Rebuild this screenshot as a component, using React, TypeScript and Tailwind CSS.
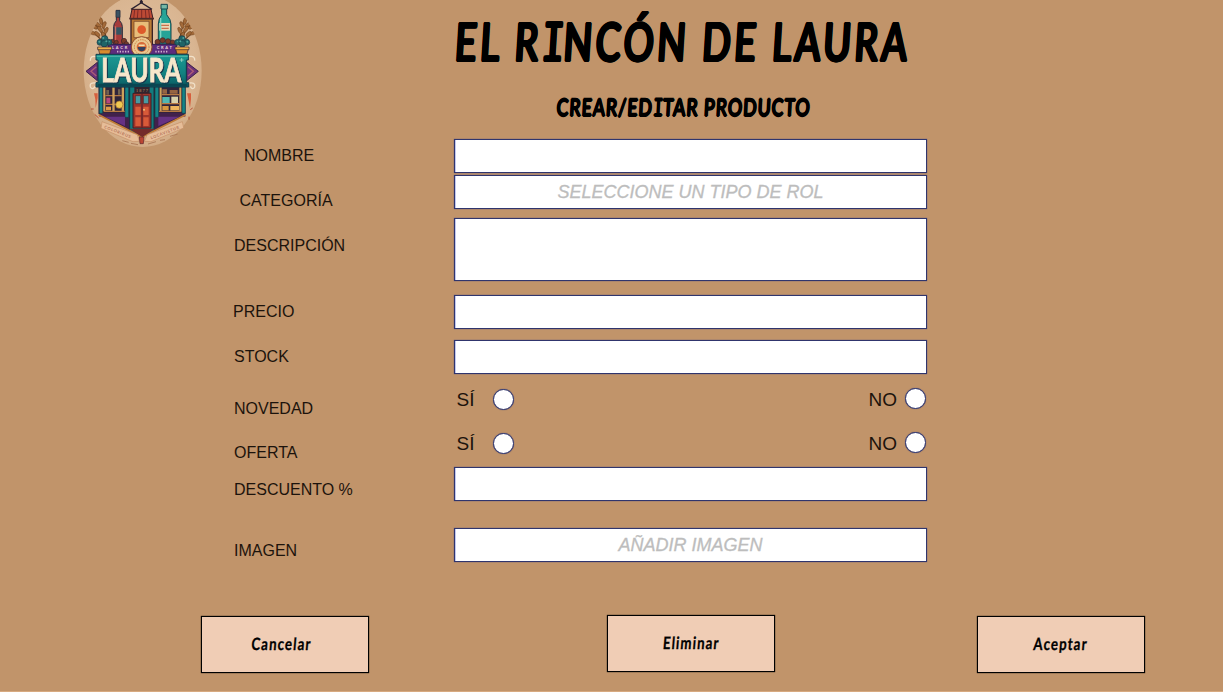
import React from "react";

const inputBase =
  "block w-full rounded-none border border-[#30356d] bg-white text-center font-['Liberation_Sans',sans-serif] text-[18px] italic text-black shadow-[inset_1px_0_0_#c3c8ee,0_0_1px_#4a4a80] outline-none placeholder:text-[#bdbdbd] placeholder:opacity-100 placeholder:[-webkit-text-stroke:0.3px_#bdbdbd]";

function Field({ className, placeholder, label }: { className: string; placeholder?: string; label: string }) {
  return <input type="text" aria-label={label} placeholder={placeholder} className={`${inputBase} ${className}`} />;
}

function Radio({ name, className }: { name: string; className: string }) {
  return (
    <input
      type="radio"
      name={name}
      className={`h-[21px] w-[21px] shrink-0 appearance-none rounded-full border border-[#30356d] bg-white shadow-[0_0_1px_#30356d] checked:bg-[#30356d] ${className}`}
    />
  );
}

function YesNo({ name, className }: { name: string; className: string }) {
  return (
    <div className={`flex h-[22px] items-start text-[19px] leading-[22px] text-[#1c130c] ${className}`}>
      <span className="ml-[2.5px] mt-[1px] w-[36px]">SÍ</span>
      <Radio name={name} className="mt-[1px]" />
      <span className="ml-auto mr-[8px] mt-[1px]">NO</span>
      <Radio name={name} className="mr-[1px]" />
    </div>
  );
}

const labels = [
  { text: "NOMBRE", className: "ml-[11px]" },
  { text: "CATEGORÍA", className: "ml-[6.5px] mt-[27px]" },
  { text: "DESCRIPCIÓN", className: "ml-[1px] mt-[27px]" },
  { text: "PRECIO", className: "mt-[48px]" },
  { text: "STOCK", className: "ml-[1px] mt-[27px]" },
  { text: "NOVEDAD", className: "ml-[1px] mt-[34px]" },
  { text: "OFERTA", className: "ml-[1px] mt-[26px]" },
  { text: "DESCUENTO %", className: "ml-[1px] mt-[19px]" },
  { text: "IMAGEN", className: "ml-[1px] mt-[43px]" },
];

function Wheat() {
  return (
    <g>
      <path d="M88 125 Q78 92 58 74 M92 120 Q84 84 76 58 M82 128 Q64 104 46 98" stroke="#6f4426" strokeWidth="4" fill="none" />
      <g fill="#a36a39" stroke="#70431f" strokeWidth="1.5">
        <ellipse cx="75" cy="63" rx="5" ry="11" transform="rotate(-15 75 63)" />
        <ellipse cx="66" cy="74" rx="5" ry="11" transform="rotate(-50 66 74)" />
        <ellipse cx="84" cy="75" rx="5" ry="11" transform="rotate(25 84 75)" />
        <ellipse cx="55" cy="80" rx="5" ry="11" transform="rotate(-55 55 80)" />
        <ellipse cx="72" cy="88" rx="5" ry="11" transform="rotate(-40 72 88)" />
        <ellipse cx="90" cy="92" rx="5" ry="11" transform="rotate(25 90 92)" />
        <ellipse cx="50" cy="99" rx="5" ry="10" transform="rotate(-70 50 99)" />
        <ellipse cx="64" cy="102" rx="5" ry="10" transform="rotate(-45 64 102)" />
        <ellipse cx="82" cy="106" rx="5" ry="10" transform="rotate(-15 82 106)" />
      </g>
    </g>
  );
}

function Planter() {
  return (
    <g>
      <g fill="#1f6467" stroke="#173b48" strokeWidth="2">
        <circle cx="72" cy="127" r="9" />
        <circle cx="86" cy="117" r="10" />
        <circle cx="99" cy="127" r="9" />
        <circle cx="85" cy="131" r="10" />
      </g>
      <g fill="#4fa39b">
        <circle cx="82" cy="114" r="3" />
        <circle cx="70" cy="125" r="3" />
        <circle cx="91" cy="124" r="3" />
        <circle cx="100" cy="125" r="2" />
      </g>
      <path d="M66 143 H106 L101 162 H71Z" fill="#d98b2e" stroke="#3b2430" strokeWidth="2" />
      <path d="M65 141 H107 V149 H65Z" fill="#efb04b" stroke="#3b2430" strokeWidth="2" />
    </g>
  );
}

function Logo() {
  return (
    <svg width="134" height="152" viewBox="0 0 402 456" role="img" aria-label="Laura" className="block">
      <defs>
        <radialGradient id="oval" cx="50%" cy="45%" r="60%">
          <stop offset="0" stopColor="#e3c2a3" />
          <stop offset="0.75" stopColor="#d9b591" />
          <stop offset="1" stopColor="#cfa780" />
        </radialGradient>
        <linearGradient id="sign" x1="0" y1="0" x2="0" y2="1">
          <stop offset="0" stopColor="#1c9a94" />
          <stop offset="0.6" stopColor="#11807f" />
          <stop offset="1" stopColor="#0a5960" />
        </linearGradient>
        <clipPath id="ovalClip">
          <ellipse cx="200" cy="212" rx="177" ry="229" />
        </clipPath>
      </defs>
      <ellipse cx="200" cy="212" rx="177" ry="229" fill="url(#oval)" />

      <g clipPath="url(#ovalClip)">
        <Wheat />
        <g transform="translate(402 0) scale(-1 1)">
          <Wheat />
        </g>
      </g>

      {/* lantern */}
      <path d="M196 0 V10 M165 28 L196 8 L228 28" fill="none" stroke="#2c2230" strokeWidth="4" />
      <circle cx="196" cy="6" r="5" fill="#2c2230" />
      <path d="M168 28 H225 L231 56 H162Z" fill="#bd4a35" stroke="#3a1c23" strokeWidth="3" />
      <path d="M176 30 L173 55 M186 30 L184 55 M197 30 V55 M208 30 L210 55 M218 30 L221 55" stroke="#7e2a26" strokeWidth="3" />
      <path d="M165 56 H229 V135 H165Z" fill="#b97a34" stroke="#3a2227" strokeWidth="4" />
      <path d="M174 64 H219 V113 H174Z" fill="#e8bd79" stroke="#6c3b22" strokeWidth="2" />
      <circle cx="197" cy="89" r="13" fill="#de5a2b" />
      <path d="M160 56 H234" stroke="#4e2a27" strokeWidth="5" />

      {/* bottles */}
      <path d="M121 32 H131 V62 Q139 70 139 80 V134 H113 V80 Q113 70 121 62Z" fill="#a53c3b" stroke="#252b3b" strokeWidth="3" />
      <path d="M120 31 H132 V52 H120Z" fill="#3a5262" stroke="#252b3b" strokeWidth="2" />
      <path d="M115 82 H137 V104 H115Z" fill="#355461" />
      <path d="M119 79 V125" stroke="#df7565" strokeWidth="3" />
      <path d="M257 16 H272 V44 Q285 59 285 72 V132 H247 V72 Q247 57 257 44Z" fill="#26a497" stroke="#17464d" strokeWidth="3" />
      <path d="M255 13 H274 V27 H255Z" fill="#75b8a6" stroke="#17464d" strokeWidth="3" />
      <path d="M250 69 H282 V92 H250Z" fill="#e8d9b8" />
      <path d="M254 76 H279 M256 85 H278" stroke="#cb704b" strokeWidth="4" />
      <path d="M254 54 V120" stroke="#80d6c3" strokeWidth="4" />
      <g fill="#783a27" stroke="#3c2229" strokeWidth="2">
        <circle cx="109" cy="124" r="6" />
        <circle cx="121" cy="127" r="6" />
        <circle cx="144" cy="123" r="8" />
        <circle cx="151" cy="132" r="7" />
        <circle cx="245" cy="126" r="8" />
        <circle cx="260" cy="121" r="8" />
        <circle cx="276" cy="124" r="8" />
        <circle cx="290" cy="127" r="7" />
      </g>

      {/* purple banner */}
      <path d="M96 133 H301 V166 H96Z" fill="#5d2c7d" stroke="#30204c" strokeWidth="3" />
      <g fill="#ead2d6" fontSize="12" className="font-['Lato',sans-serif] font-black">
        <text x="108" y="147" textLength="46">LACR</text>
        <text x="242" y="147" textLength="46">CRAT</text>
      </g>
      <path d="M123 155 H160 M238 155 H276" stroke="#cfb0cd" strokeWidth="5" strokeDasharray="4 4" />
      <Planter />
      <g transform="translate(404 0) scale(-1 1)">
        <Planter />
      </g>
      <circle cx="197" cy="141" r="31" fill="#eac78f" stroke="#8f4b2b" strokeWidth="3" />
      <circle cx="197" cy="141" r="22" fill="none" stroke="#cd7c3d" strokeWidth="3" strokeDasharray="4 3" />
      <circle cx="197" cy="141" r="15" fill="#d86b38" />
      <path d="M185 141 H209 Q207 154 197 154 Q187 154 185 141Z" fill="#37405b" />
      <path d="M188 136 H206" stroke="#f5dfaa" strokeWidth="5" />

      {/* side ornaments */}
      <g stroke="#3a214b" strokeWidth="3">
        <path d="M64 187 L30 214 L64 242Z" fill="#6d3278" />
        <path d="M332 187 L367 214 L332 242Z" fill="#6d3278" />
      </g>
      <path d="M61 200 L45 214 L61 228 M336 200 L352 214 L336 228" fill="none" stroke="#ad5d76" strokeWidth="4" />
      <path d="M60 170 Q42 166 43 182 M338 170 Q358 166 356 182 M60 249 Q39 246 43 261 Q50 272 57 259 M340 249 Q359 246 356 261 Q350 272 343 259" fill="none" stroke="#f1e1c9" strokeWidth="4" />
      <path d="M54 280 H65 V294 L59 324 L58 298Z M333 280 H345 V298 L342 324 L337 298Z" fill="#d65f3d" />

      {/* shop front */}
      <path d="M69 258 H327 V342 L199 410 L69 342Z" fill="#42214b" stroke="#2b203c" strokeWidth="3" />
      <path d="M78 260 H318 V338 H78Z" fill="#30253a" />
      <path d="M70 260 H80 V340 H70Z M147 260 H158 V352 H147Z M237 260 H248 V352 H237Z M318 260 H328 V340 H318Z" fill="#148486" stroke="#163d4a" strokeWidth="2" />
      <path d="M82 262 H88 V333 H82Z M137 262 H144 V333 H137Z M251 262 H257 V333 H251Z M310 262 H316 V333 H310Z" fill="#cfa15b" />
      <path d="M88 287 H137 M88 313 H137 M257 284 H310 M257 311 H310 M83 334 H146 M249 334 H316" stroke="#b87942" strokeWidth="4" />
      <path d="M109 262 H116 V333 H109Z" fill="#cfa15b" />
      <path d="M91 270 H99 V284 H91Z M126 268 H133 V284 H126Z" fill="#70604f" />
      <path d="M91 293 H103 V310 H91Z" fill="#b7477a" />
      <circle cx="130" cy="314" r="11" fill="#efc850" stroke="#9c6528" strokeWidth="2" />
      <path d="M90 320 H105 V331 H90Z" fill="#df9a46" />
      <path d="M259 291 H281 V309 H259Z" fill="#51b7b1" />
      <path d="M286 290 H306 V309 H286Z" fill="#d9d2aa" />
      <path d="M259 268 H273 V281 H259Z M281 270 H305 V281 H281Z" fill="#956442" />
      <path d="M259 318 H278 V331 H259Z" fill="#d8983d" />
      <path d="M283 318 H309 V331 H283Z" fill="#edb65d" />
      <path d="M70 343 L147 378 V350 H70Z M328 343 L247 378 V350 H328Z" fill="#663183" />
      <path d="M161 258 H234 V393 L198 411 L161 393Z" fill="#137b7e" stroke="#18323e" strokeWidth="3" />
      <path d="M171 280 H225 V384 H171Z" fill="#9f342a" stroke="#401d25" strokeWidth="3" />
      <path d="M178 287 H194 V311 H178Z M202 287 H218 V311 H202Z" fill="#489aa1" stroke="#4a2025" strokeWidth="2" />
      <path d="M178 320 H194 V345 H178Z M202 320 H218 V345 H202Z M178 352 H194 V378 H178Z M202 352 H218 V378 H202Z" fill="#d85a39" />
      <path d="M198 281 V383" stroke="#50202a" strokeWidth="3" />
      <circle cx="204" cy="329" r="3" fill="#f1c574" />
      <path d="M68 344 L198 411 L329 344" fill="none" stroke="#c07a35" strokeWidth="5" />
      <path d="M159 386 H237 L199 411Z" fill="#742b2a" />

      {/* main sign */}
      <path d="M60 163 H337 V180 H331 V248 H338 V261 H60 V248 H66 V180 H60Z" fill="url(#sign)" stroke="#12394a" strokeWidth="3" />
      <path d="M62 169 H335" stroke="#53b9aa" strokeWidth="3" />
      <path d="M65 255 H334" stroke="#0a4652" strokeWidth="7" />
      <text
        x="76"
        y="245"
        fontSize="95"
        textLength="240"
        lengthAdjust="spacingAndGlyphs"
        fill="#f7e7cb"
        stroke="#f7e7cb"
        strokeWidth="2.5"
        className="font-['Lato',sans-serif] font-bold drop-shadow-[3px_3px_0_#17334a]"
      >
        LAURA
      </text>
      <path d="M317 174 V186 M311 180 H323" stroke="#b9e3cf" strokeWidth="2" />
      <path d="M175 261 H221 V279 H175Z" fill="#32242f" />
      <text x="180" y="277" fontSize="13" textLength="36" fill="#cda268" className="font-['Liberation_Serif',serif]">1877</text>

      {/* ribbon */}
      <g fill="#e6bd98" stroke="#c58f67" strokeWidth="2">
        <path d="M78 365 L184 404 L190 424 L171 425 L75 385Z" />
        <path d="M319 365 L214 404 L205 424 L225 425 L323 384Z" />
      </g>
      <g fill="#b5745a" fontSize="12" className="font-['Lato',sans-serif] font-bold">
        <text transform="translate(84 384) rotate(21)" textLength="84">COLORIBUS</text>
        <text transform="translate(226 418) rotate(-21)" textLength="90">LOCAVISTUR</text>
      </g>
      <path d="M139 422 L158 427 M165 430 L186 434 M216 432 L240 425 M252 421 L267 419 M282 409 L305 402" stroke="#a87553" strokeWidth="2.5" fill="none" />
      <path d="M190 411 H204 L202 431 H192Z" fill="#bc4633" stroke="#5c262a" strokeWidth="2" />
      <path d="M56 343 L68 354 M339 350 V359 M45 327 H53 M343 329 L350 324" stroke="#b85036" strokeWidth="3" />
    </svg>
  );
}

const buttonBase =
  "flex h-[57px] w-[168px] items-center justify-center border border-black bg-[#f0cdb5] pb-[2px] font-['Lato',sans-serif] text-[17px] font-bold text-black shadow-[0_0_1px_#000]";
const buttonText =
  "inline-block -skew-x-6 scale-x-[0.78] whitespace-nowrap tracking-[1.4px] [-webkit-text-stroke:0.3px_black]";

/* capital I with top and bottom bars, as in brush lettering */
function BarI() {
  return <span className="font-['DejaVu_Sans_Mono',monospace] font-normal tracking-[-1px]">I</span>;
}

export default function App() {
  return (
    <main className="flex h-[692px] w-[1223px] flex-col overflow-hidden border-b border-[#d8aa80] bg-[#c1946a] font-['Liberation_Sans',sans-serif] text-black">
      <div className="flex h-[615px] items-start">
        <aside className="w-[233px] shrink-0 pl-[76px]">
          <Logo />
        </aside>

        <div className="flex w-[221px] shrink-0 flex-col items-start pt-[147px] text-[16px] leading-[18px] text-[#1c130c]">
          {labels.map((l) => (
            <span key={l.text} className={l.className}>
              {l.text}
            </span>
          ))}
        </div>

        <section className="w-[473px] shrink-0">
          <header className="flex h-[139px] flex-col items-center pr-[14px] font-['Lato',sans-serif]">
            <h1 className="mt-[7px] h-[68px] origin-center -skew-x-[5deg] scale-x-[0.705] whitespace-nowrap text-[53px] font-medium leading-[68px] tracking-[5px] [text-shadow:1.8px_0_0_#000,-1.8px_0_0_#000,0_1.3px_0_#000,0_-1.3px_0_#000,1.2px_1px_0_#000,-1.2px_1px_0_#000,1.2px_-1px_0_#000,-1.2px_-1px_0_#000]">
              EL R<BarI />NCÓN DE LAURA
            </h1>
            <h2 className="mt-[17px] h-[30px] origin-center -skew-x-[4deg] scale-x-[0.74] whitespace-nowrap text-[24px] font-semibold leading-[30px] tracking-[1.3px] [text-shadow:1px_0_0_#000,-1px_0_0_#000,0_0.7px_0_#000,0_-0.7px_0_#000]">
              CREAR/ED<BarI />TAR PRODUCTO
            </h2>
          </header>
          <form className="flex flex-col">
            <Field label="Nombre" className="h-[34px]" />
            <Field label="Categoría" className="mt-[2px] h-[34px]" placeholder="SELECCIONE UN TIPO DE ROL" />
            <textarea aria-label="Descripción" className={`${inputBase} mt-[9px] h-[63px] resize-none`} />
            <Field label="Precio" className="mt-[14px] h-[34px]" />
            <Field label="Stock" className="mt-[11px] h-[34px]" />
            <YesNo name="novedad" className="mt-[14px]" />
            <YesNo name="oferta" className="mt-[22px]" />
            <Field label="Descuento" className="mt-[13px] h-[34px]" />
            <Field label="Imagen" className="mt-[27px] h-[34px]" placeholder="AÑADIR IMAGEN" />
          </form>
        </section>
      </div>

      <footer className="flex items-start">
        <button type="button" className={`${buttonBase} ml-[201px] mt-[1px] pr-[8px]`}>
          <span className={buttonText}>Cancelar</span>
        </button>
        <button type="button" className={`${buttonBase} ml-[238px]`}>
          <span className={buttonText}>Eliminar</span>
        </button>
        <button type="button" className={`${buttonBase} ml-[202px] mt-[1px]`}>
          <span className={buttonText}>Aceptar</span>
        </button>
      </footer>
    </main>
  );
}
